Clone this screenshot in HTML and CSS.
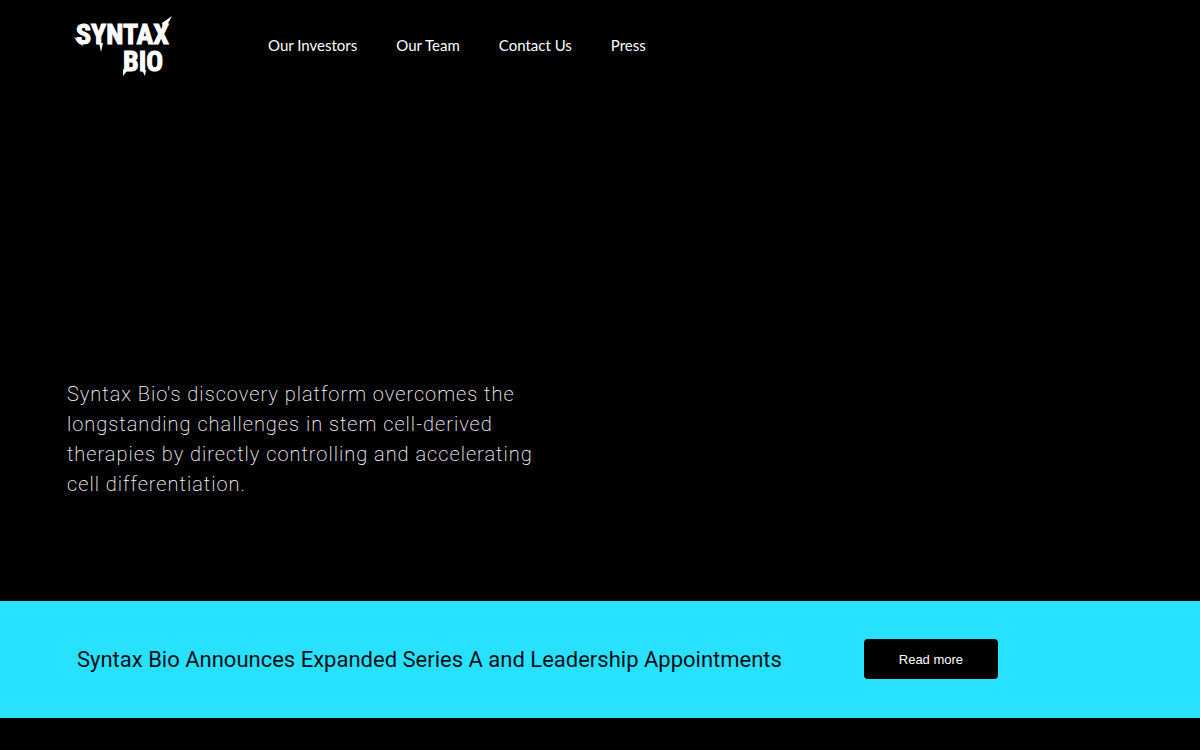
FILE: index.html
```html
<!DOCTYPE html>
<html lang="en">
<head>
  <meta charset="UTF-8" />
  <meta name="viewport" content="width=device-width, initial-scale=1.0" />
  <title>Syntax Bio</title>
  <link rel="stylesheet" href="styles.css">
</head>
<body>
  <header class="header">
    <a class="logo" href="#">
      <svg width="102" height="64" viewBox="0 0 102 64" role="img" aria-label="Syntax Bio">
        <text class="logo-text" x="4" y="30">SYNTAX</text>
        <text class="logo-text" x="51" y="57">BIO</text>
        <!-- spikes around the wordmark -->
        <path d="M100 2 L90 9 L91 15 L94 13 Z M2 23 L6 29 L11 32 L9 27 Z M27 29 L31 29 L29 38 Z M51 55 L55 57 L51 62 Z M70 56 L74 56 L73 62 Z" />
      </svg>
    </a>
    <nav class="nav">
      <a href="#investors">Our Investors</a>
      <a href="#team">Our Team</a>
      <a href="#contact">Contact Us</a>
      <a href="#press">Press</a>
    </nav>
  </header>

  <main>
    <section class="hero">
      <p>Syntax Bio's discovery platform overcomes the longstanding challenges in stem cell-derived therapies by directly controlling and accelerating cell differentiation.</p>
    </section>

    <section class="news">
      <h2>Syntax Bio Announces Expanded Series A and Leadership Appointments</h2>
      <button class="btn" type="button">Read more</button>
    </section>
  </main>
</body>
</html>
```
FILE: styles.css
```css
body {
  font-family: Roboto, sans-serif;
  margin: 0;
  background: #000;
  color: #fff;
}
.header {
  display: flex;
  align-items: center;
  gap: 94px;
  padding: 14px 72px;
}
.logo svg {
  display: block;
  fill: #fff;
}
.logo-text {
  font-family: "Roboto Condensed", "Liberation Sans Narrow", Roboto, sans-serif;
  font-size: 28px;
  font-weight: 700;
  stroke: #fff;
  stroke-width: 1px;
  stroke-linejoin: miter;
}
.nav {
  display: flex;
  gap: 39px;
  padding-bottom: 3px;
  font-family: Lato, sans-serif;
  font-size: 15px;
}
.nav a {
  color: #fff;
  text-decoration: none;
}
.hero {
  padding: 287px 67px 102px;
}
.hero p {
  max-width: 480px;
  margin: 0;
  font-size: 20px;
  font-weight: 200;
  line-height: 30px;
  letter-spacing: 1px;
}
.news {
  display: flex;
  align-items: center;
  gap: 82px;
  padding: 38px 77px 39px;
  background: #28e1ff;
  color: #001018;
}
.news h2 {
  margin: 0;
  font-size: 22px;
  font-weight: 400;
}
.btn {
  width: 134px;
  height: 40px;
  border: none;
  border-radius: 4px;
  background: #000;
  color: #fff;
  font-family: "Liberation Sans", Arial, sans-serif;
  font-size: 13px;
  cursor: pointer;
}
```
